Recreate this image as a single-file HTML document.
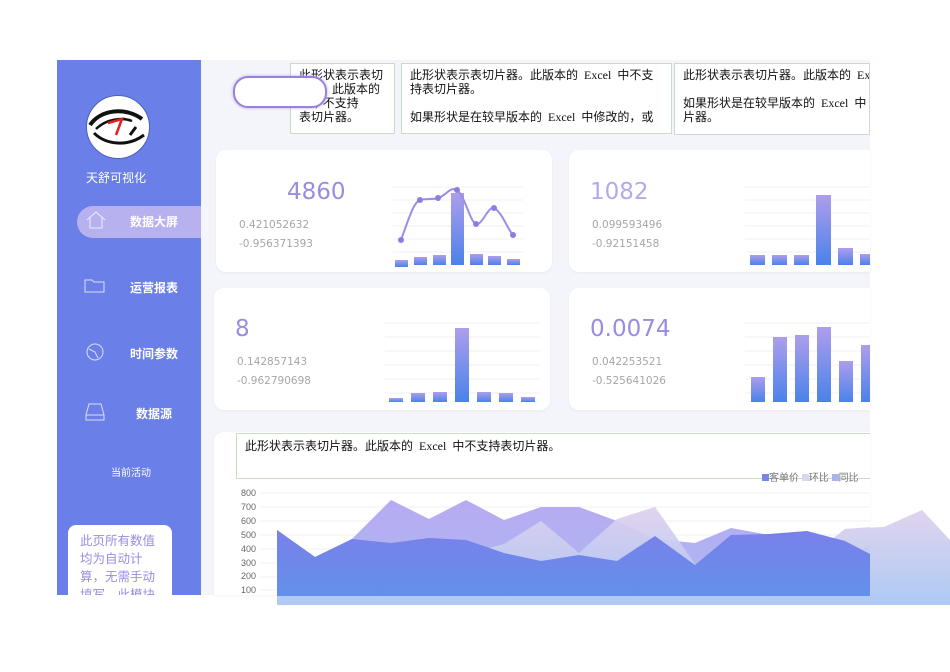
<!DOCTYPE html>
<html><head><meta charset="utf-8"><style>
body{margin:0;width:950px;height:672px;background:#fff;position:relative;overflow:hidden;font-family:"Liberation Sans","Noto Sans CJK SC",sans-serif}
.a{position:absolute}
.side{left:57px;top:60px;width:144px;height:535px;background:#6a7fe8}
.main{left:201px;top:60px;width:669px;height:535px;background:#f4f5fa}
.card{position:absolute;background:#fff;border-radius:10px;box-shadow:0 1px 3px rgba(0,0,0,.05)}
.big{color:#9a8ce0;font-size:23px;font-family:"DejaVu Sans",sans-serif}
.sm{color:#a6a6a6;font-size:10.5px;font-family:"DejaVu Sans",sans-serif}
.slic{position:absolute;background:#fff;border:1px solid #c8dcc8;font-family:"Liberation Serif","Noto Sans CJK SC",serif;font-size:12px;color:#111;line-height:14px;overflow:hidden;box-sizing:border-box;padding:4px 0 0 8px;white-space:nowrap}
.nav{position:absolute;color:#fff;font-weight:bold;font-size:12px}
</style></head><body>
<div class="a side"></div>
<div class="a main"></div>

<!-- logo -->
<svg class="a" style="left:86px;top:95px" width="64" height="64" viewBox="0 0 64 64">
<circle cx="32" cy="32" r="31.5" fill="#fff" stroke="#4c5fbf" stroke-width="1"/>
<path d="M4 30 C15 14 40 12 56 24" stroke="#111" stroke-width="4" fill="none"/>
<path d="M8 38 C20 50 42 52 58 40" stroke="#111" stroke-width="3" fill="none"/>
<path d="M10 34 C20 24 36 22 46 26" stroke="#111" stroke-width="2.5" fill="none"/>
<path d="M44 40 L50 32" stroke="#111" stroke-width="3"/>
<path d="M22 28 L36 24 L30 40" stroke="#d22" stroke-width="2.5" fill="none"/>
</svg>
<div class="a" style="left:86px;top:169px;color:#fff;font-size:12px">天舒可视化</div>

<div class="a" style="left:77px;top:206px;width:124px;height:32px;background:#b7b1ef;border-radius:16px 0 0 16px"></div>
<svg class="a" style="left:85px;top:210px" width="22" height="20"><path d="M2 10 L11 2 L20 10 M5 8 V18 H17 V8" stroke="#eef" fill="none" stroke-width="1"/></svg>
<div class="nav" style="left:130px;top:213px">数据大屏</div>
<svg class="a" style="left:84px;top:279px" width="22" height="14"><path d="M1 1 H8 L10 3 H20 V13 H1 Z" stroke="#dde" fill="none"/></svg>
<div class="nav" style="left:130px;top:279px">运营报表</div>
<svg class="a" style="left:84px;top:343px" width="22" height="18"><circle cx="11" cy="9" r="8" stroke="#dde" fill="none"/><path d="M5 6 L11 9 L14 15" stroke="#dde" fill="none"/></svg>
<div class="nav" style="left:130px;top:345px">时间参数</div>
<svg class="a" style="left:85px;top:403px" width="20" height="18"><path d="M4 1 H16 L19 12 V17 H1 V12 Z M1 12 H19" stroke="#dde" fill="none"/></svg>
<div class="nav" style="left:136px;top:405px">数据源</div>
<div class="a" style="left:111px;top:464px;color:#fff;font-size:10px">当前活动</div>
<div class="a" style="left:68px;top:525px;width:104px;height:70px;background:#fff;border-radius:8px 8px 0 0;overflow:hidden;color:#9a8ce0;font-size:12.5px;line-height:18px;padding:7px 0 0 12px;box-sizing:border-box">此页所有数值<br>均为自动计<br>算，无需手动<br>填写，此模块</div>

<!-- slicers -->
<div class="slic" style="left:290px;top:63px;width:105px;height:71px">此形状表示表切<br>&nbsp;&nbsp;&nbsp;&nbsp;&nbsp;&nbsp;&nbsp;&nbsp;&nbsp;&nbsp;&nbsp;此版本的<br>el 中不支持<br>表切片器。</div>
<div class="a" style="left:233px;top:76px;width:90px;height:28px;border:2px solid #9a82dc;border-radius:15px;background:#fff;box-shadow:0 0 3px #b9a9ee"></div>
<div class="slic" style="left:401px;top:63px;width:271px;height:71px">此形状表示表切片器。此版本的&nbsp; Excel&nbsp; 中不支<br>持表切片器。<br><br>如果形状是在较早版本的&nbsp; Excel&nbsp; 中修改的，或</div>
<div class="slic" style="left:674px;top:63px;width:196px;height:72px">此形状表示表切片器。此版本的&nbsp; Excel<br><br>如果形状是在较早版本的&nbsp; Excel&nbsp; 中<br>片器。</div>

<!-- cards -->
<div class="card" style="left:216px;top:150px;width:336px;height:122px"></div>
<div class="card" style="left:569px;top:150px;width:301px;height:122px;border-radius:10px 0 0 10px"></div>
<div class="card" style="left:214px;top:288px;width:336px;height:122px"></div>
<div class="card" style="left:569px;top:288px;width:301px;height:122px;border-radius:10px 0 0 10px"></div>
<div class="card" style="left:214px;top:432px;width:656px;height:163px;border-radius:10px 0 0 0"></div>

<div class="a big" style="left:287px;top:179px">4860</div>
<div class="a sm" style="left:239px;top:219px">0.421052632</div>
<div class="a sm" style="left:239px;top:238px">-0.956371393</div>
<div class="a big" style="left:590px;top:179px;color:#b3aaea">1082</div>
<div class="a sm" style="left:592px;top:219px">0.099593496</div>
<div class="a sm" style="left:592px;top:238px">-0.92151458</div>
<div class="a big" style="left:235px;top:316px">8</div>
<div class="a sm" style="left:237px;top:356px">0.142857143</div>
<div class="a sm" style="left:237px;top:375px">-0.962790698</div>
<div class="a big" style="left:590px;top:316px">0.0074</div>
<div class="a sm" style="left:592px;top:356px">0.042253521</div>
<div class="a sm" style="left:592px;top:375px">-0.525641026</div>

<svg class="a" style="left:0;top:0" width="950" height="672">
<defs>
<linearGradient id="bg" x1="0" y1="0" x2="0" y2="1"><stop offset="0" stop-color="#ad9eec"/><stop offset="1" stop-color="#4a82ea"/></linearGradient>
<linearGradient id="gp" x1="0" y1="0" x2="0" y2="1"><stop offset="0" stop-color="#b3a6f2"/><stop offset="1" stop-color="#a6b6ee"/></linearGradient>
<linearGradient id="gk" x1="0" y1="0" x2="0" y2="1"><stop offset="0" stop-color="#e2d4ee"/><stop offset="1" stop-color="#aecaf4"/></linearGradient>
<linearGradient id="gb" x1="0" y1="0" x2="0" y2="1"><stop offset="0" stop-color="#7a80ea"/><stop offset="1" stop-color="#5f92ea"/></linearGradient>
<clipPath id="c1"><rect x="0" y="0" width="870" height="596"/></clipPath>
</defs>
<g stroke="#f0f1f5" stroke-width="1">
<path d="M393 187H523M393 200H523M393 213H523M393 226H523M393 239H523M393 252H523"/>
<path d="M745 187H870M745 200H870M745 213H870M745 226H870M745 239H870M745 252H870"/>
<path d="M385 323H540M385 337H540M385 351H540M385 365H540M385 379H540M385 393H540"/>
<path d="M745 323H870M745 337H870M745 351H870M745 365H870M745 379H870M745 393H870"/>
<path d="M260 493H870M260 507H870M260 521H870M260 535H870M260 549H870M260 563H870M260 577H870M260 590H870"/>
</g>
<g fill="url(#bg)">
<rect x="395" y="260" width="13" height="7"/><rect x="414" y="257" width="13" height="8"/><rect x="433" y="255" width="13" height="10"/><rect x="451" y="193" width="13" height="72"/><rect x="470" y="254" width="13" height="11"/><rect x="488" y="256" width="13" height="9"/><rect x="507" y="259" width="13" height="6"/>
<rect x="750" y="255" width="15" height="10"/><rect x="772" y="255" width="15" height="10"/><rect x="794" y="255" width="15" height="10"/><rect x="816" y="195" width="15" height="70"/><rect x="838" y="248" width="15" height="17"/><rect x="860" y="254" width="10" height="11"/>
<rect x="389" y="398" width="14" height="4"/><rect x="411" y="393" width="14" height="9"/><rect x="433" y="392" width="14" height="10"/><rect x="455" y="328" width="14" height="74"/><rect x="477" y="392" width="14" height="10"/><rect x="499" y="393" width="14" height="9"/><rect x="521" y="397" width="14" height="5"/>
<rect x="751" y="377" width="14" height="25"/><rect x="773" y="337" width="14" height="65"/><rect x="795" y="335" width="14" height="67"/><rect x="817" y="327" width="14" height="75"/><rect x="839" y="361" width="14" height="41"/><rect x="861" y="345" width="9" height="57"/>
</g>
<path d="M401 240 C410 215 414 202 420 200 C428 198 432 200 438 198 C446 196 450 186 457 190 C465 196 470 222 476 224 C482 226 488 206 494 208 C502 212 508 230 513 235" stroke="#9e8ce6" stroke-width="2" fill="none"/>
<g fill="#8f7ce0"><circle cx="401" cy="240" r="3"/><circle cx="420" cy="200" r="3"/><circle cx="438" cy="198" r="3"/><circle cx="457" cy="190" r="3"/><circle cx="476" cy="224" r="3"/><circle cx="494" cy="208" r="3"/><circle cx="513" cy="235" r="3"/></g>

<path d="M277 604 L277 567 315 557 352 562 391 572 429 551 466 554 504 544 541 521 579 553 617 519 655 507 695 564 731 558 769 565 807 559 845 529 884 527 922 510 950 540 950 605 277 605Z" fill="url(#gk)"/>
<g clip-path="url(#c1)">
<path d="M277 604 L277 530 315 557 352 539 391 500 429 519 466 500 504 520 541 507 579 507 617 521 655 539 695 543 731 528 769 535 807 561 845 558 870 545 870 604Z" fill="url(#gp)" opacity=".95"/>
<path d="M277 604 L277 567 315 557 352 562 391 572 429 551 466 554 504 544 541 521 579 553 617 519 655 507 695 564 731 558 769 565 807 559 845 529 870 527 870 604Z" fill="url(#gk)" opacity=".85"/>
<path d="M277 604 L277 530 315 557 352 539 391 543 429 538 466 540 504 553 541 561 579 555 617 561 655 536 695 565 731 535 769 534 807 531 845 541 870 554 870 604Z" fill="url(#gb)"/>
</g>
</svg>

<div class="slic" style="left:236px;top:433px;width:634px;height:46px;border-right:none;padding-top:5px">此形状表示表切片器。此版本的&nbsp; Excel&nbsp; 中不支持表切片器。</div>
<div class="a" style="left:762px;top:469px;font-size:10px;color:#777;white-space:nowrap;width:108px;overflow:hidden"><span style="display:inline-block;width:7px;height:7px;background:#7a84e6"></span>客单价 <span style="display:inline-block;width:7px;height:7px;background:#d6d8f2"></span>环比 <span style="display:inline-block;width:7px;height:7px;background:#a9b4ee"></span>同比</div>
<div class="a" style="left:238px;top:487px;font-size:9px;color:#666;line-height:13.9px;text-align:right;width:18px">800<br>700<br>600<br>500<br>400<br>300<br>200<br>100</div>
</body></html>
